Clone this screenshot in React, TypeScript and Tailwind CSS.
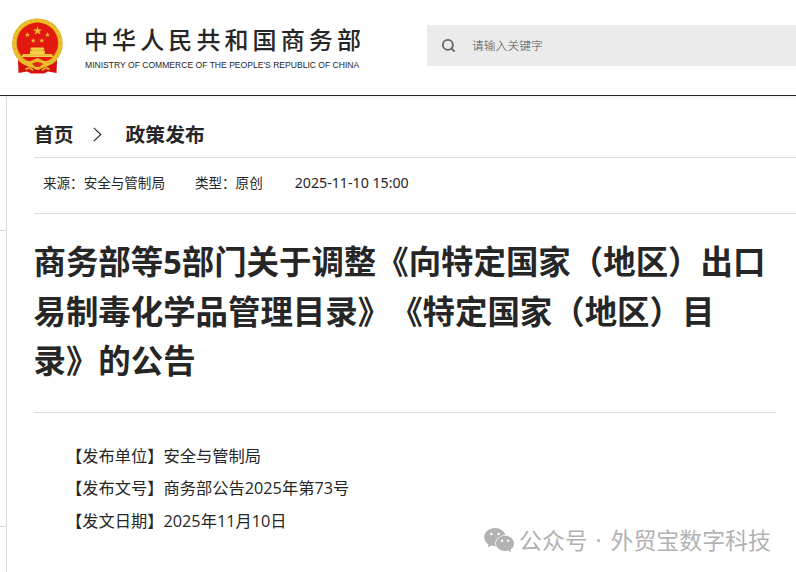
import { Search } from 'lucide-react';

const notice = [
  { label: '【发布单位】', value: '安全与管制局' },
  { label: '【发布文号】', value: '商务部公告2025年第73号' },
  { label: '【发文日期】', value: '2025年11月10日' },
];

const titleLines = [
  '商务部等5部门关于调整《向特定国家（地区）出口',
  '易制毒化学品管理目录》《特定国家（地区）目',
  '录》的公告',
];

const STAR = '0,-5 1.2,-1.6 4.8,-1.5 1.9,0.6 3,4 0,2 -3,4 -1.9,0.6 -4.8,-1.5 -1.2,-1.6';

function Emblem() {
  return (
    <svg className="h-[56px] w-[54px] shrink-0 overflow-visible" viewBox="0 0 54 56">
      <path d="M9 38 L46 38 L47 42 L46.5 54 L38 52.5 L34 54.5 L21 54.5 L17 52.5 L8.5 54 L8 42 Z" fill="#d6130d" />
      <ellipse cx="27.4" cy="24.4" rx="25.3" ry="25" fill="#dda51f" />
      <ellipse cx="27.4" cy="24.4" rx="23.1" ry="22.9" fill="none" stroke="#f0c32d" strokeWidth="3" />
      <ellipse cx="27.4" cy="24.4" rx="23.3" ry="23.1" fill="none" stroke="#dfa722" strokeWidth="1.6" strokeDasharray="1 5" />
      <ellipse cx="27.4" cy="24" rx="20.6" ry="20.4" fill="#e3180f" />
      <polygon points={STAR} transform="translate(27.6 11.9) scale(.95)" fill="#e4bb30" />
      <polygon points={STAR} transform="translate(17.4 15.8) scale(.54)" fill="#e4bb30" />
      <polygon points={STAR} transform="translate(37.4 15.8) scale(.54)" fill="#e4bb30" />
      <polygon points={STAR} transform="translate(23.2 21.6) scale(.54)" fill="#e4bb30" />
      <polygon points={STAR} transform="translate(31.8 21.6) scale(.54)" fill="#e4bb30" />
      <path d="M21 28.4 h12.6 l1 2 h-1.2 v1.6 h1.4 v3 h7 l1.6 3 h-32 l1.6 -3 h7 v-3 h1.4 v-1.6 h-1.4 Z" fill="#f2cf45" />
      <path d="M19.5 31.2 h15.6 M12 36.2 h31" stroke="#e3a020" strokeWidth=".6" />
      <path d="M8 37 Q13 42.5 20.5 42 L27.5 39 L34.5 42 Q42 42.5 47 37 L46.5 41.5 Q41 47.5 34 45.5 L30.5 50 Q27.5 52 24.5 50 L21 45.5 Q14 47.5 8.5 41.5 Z" fill="#e9bb2b" />
      <path d="M22 44.8 Q27.5 41 33 44.8 L30 47.5 Q27.5 48.5 25 47.5 Z" fill="#d92a10" />
      <path d="M15.5 50.5 Q20 47.5 23 51.5 M39.5 50.5 Q35 47.5 32 51.5" stroke="#e5b02a" strokeWidth="1.7" fill="none" />
    </svg>
  );
}

function WeChatIcon() {
  return (
    <svg className="h-[26px] w-[31px] shrink-0" viewBox="0 0 31 26" fill="#b2b2b2">
      <path d="M11 0 C5 0 .2 4 .2 9.2 C.2 12.2 1.8 14.7 4.4 16.3 L3.8 19.4 L7.3 17.6 C8.5 18 9.8 18.2 11 18.2 C17 18.2 21.6 14.2 21.6 9.2 C21.6 4 17 0 11 0 Z" />
      <ellipse cx="21" cy="15.6" rx="9.9" ry="8.7" fill="#fff" />
      <path d="M21 7.8 C16 7.8 12 11.1 12 15.5 C12 19.8 16 23 21 23 C22.2 23 23.3 22.9 24.3 22.6 L27.3 24.2 L26.7 21.5 C28.8 20.1 30 18 30 15.5 C30 11.1 26 7.8 21 7.8 Z" />
      <g fill="#fff">
        <circle cx="7.4" cy="6" r="1.3" />
        <circle cx="14.6" cy="6" r="1.3" />
        <circle cx="18.1" cy="12.8" r="1.2" />
        <circle cx="24.1" cy="12.8" r="1.2" />
      </g>
    </svg>
  );
}

export default function App() {
  return (
    <div
      lang="zh-CN"
      className="relative flex h-[572px] w-[796px] flex-col overflow-hidden bg-white font-['Open_Sans','Noto_Sans_CJK_SC',sans-serif] text-[#262626] [text-spacing-trim:space-all]"
    >
      <header className="flex h-24 shrink-0 items-start border-b border-[#262626] pl-[10px] shadow-[0_1px_4px_rgba(0,0,0,0.08)]">
        <div className="pt-[19px]">
          <Emblem />
        </div>
        <div className="ml-5 w-[343px] pt-[23px] whitespace-nowrap">
          <div className="font-['Noto_Sans_CJK_SC',sans-serif] text-[24px] leading-[32px] font-medium tracking-[4.1px]">中华人民共和国商务部</div>
          <div className="mt-1 pl-px font-['Liberation_Sans',sans-serif] text-[8.57px] leading-3">
            MINISTRY OF COMMERCE OF THE PEOPLE'S REPUBLIC OF CHINA
          </div>
        </div>
        <div className="mt-[25px] flex h-[41px] flex-1 items-center bg-[#ebebeb] pl-[14px]">
          <Search size={15} strokeWidth={3} className="text-[#666]" />
          <span className="ml-4 text-[11.8px] font-light text-[#505050]">请输入关键字</span>
        </div>
      </header>

      <div className="flex flex-1">
        <aside className="flex w-[7px] shrink-0 flex-col border-r border-[#dcdcdc]">
          <div className="h-[135px] border-b border-[#dcdcdc]" />
          <div className="h-[296px] border-b border-[#dcdcdc]" />
        </aside>
        <main className="flex-1 pl-[27px]">
          <nav className="flex h-[62px] items-center border-b border-[#dcdcdc] pt-4 text-[19.8px] font-bold">
            <span>首页</span>
            <svg className="ml-[19px] h-[15px] w-[9px]" viewBox="0 0 9 15" fill="none" stroke="#262626" strokeWidth="1.1">
              <path d="M.8 .8 L7.8 7.5 L.8 14.2" />
            </svg>
            <span className="ml-6">政策发布</span>
          </nav>
          <div className="flex h-14 items-center gap-[30px] border-b border-[#dcdcdc] pb-1 pl-[9px] text-[13.55px]">
            <span>来源：安全与管制局</span>
            <span>类型：原创</span>
            <span className="pb-0.5 pl-0.5 font-['Noto_Sans',sans-serif] text-[14.2px]">2025-11-10 15:00</span>
          </div>
          <h1 className="mr-5 h-[199px] border-b border-[#dcdcdc] pt-[23.4px] text-[32.44px] leading-[49.3px] font-bold whitespace-nowrap">
            {titleLines.map((line) => (
              <div key={line} className="-ml-[0.5px]">{line}</div>
            ))}
          </h1>
          <div className="pt-[27px] pl-[32px] text-[16.25px] leading-[32.4px]">
            {notice.map((row) => (
              <p key={row.label}>{row.label}{row.value}</p>
            ))}
          </div>
        </main>
      </div>

      {/* account watermark */}
      <div className="absolute top-[528px] left-[484px] flex items-start whitespace-nowrap text-[#b2b2b2]">
        <WeChatIcon />
        <div className="-mt-[5px] ml-1 font-['Noto_Sans_CJK_SC',sans-serif] text-[22.9px] leading-[32px]">
          公众号<span className="mr-[3px] ml-0.5 font-['Open_Sans',sans-serif]"> · </span>外贸宝数字科技
        </div>
      </div>
    </div>
  );
}
